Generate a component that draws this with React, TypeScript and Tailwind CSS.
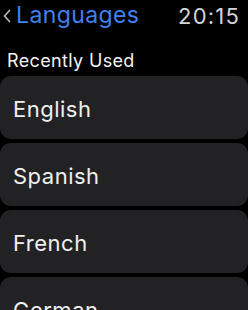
const languages = ["English", "Spanish", "French", "German"]

export default function App() {
  return (
    <div
      className="w-[248px] h-[310px] overflow-hidden bg-black text-white"
      style={{ fontFamily: "Inter, 'Liberation Sans', sans-serif" }}
    >
      {/* header */}
      <div className="flex items-center h-[31px] pl-[3px] pr-[8px]">
        <svg width="8" height="14" viewBox="0 0 8 14" className="mt-[1px]">
          <path d="M6.5 1.5 L1.5 7 L6.5 12.5" fill="none" stroke="#b8b8bc" strokeWidth="1.7" strokeLinecap="round" strokeLinejoin="round" />
        </svg>
        <span className="ml-[5px] text-[23px] leading-none text-[#3d82f0] tracking-[0.4px]">Languages</span>
        <span className="ml-auto text-[22px] leading-none text-[#d4d4d6] tracking-[1.2px]">20:15</span>
      </div>

      <div className="pl-[7px] pt-[19px] pb-[5px] text-[18px] leading-[21px] text-[#f2f2f2] tracking-[0.35px]">Recently Used</div>

      <div className="flex flex-col gap-[4px]">
        {languages.map((lang) => (
          <div key={lang} className="h-[63px] rounded-[11px] bg-[#222224] flex items-center pl-[13px] pt-[2px]">
            <span className="text-[22px] leading-none text-[#f0f0f0] tracking-[0.5px]">{lang}</span>
          </div>
        ))}
      </div>
    </div>
  )
}
